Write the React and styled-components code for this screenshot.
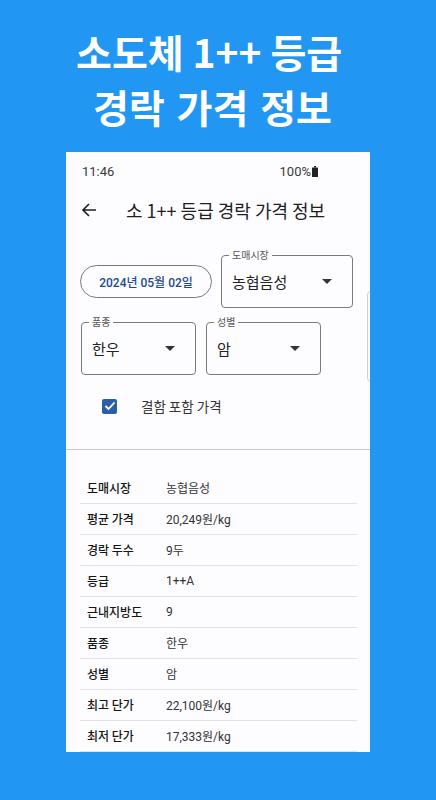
import React from 'react';
import styled, { createGlobalStyle } from 'styled-components';

const GlobalStyle = createGlobalStyle`
  html, body {
    margin: 0;
    padding: 0;
  }
  body {
    font-family: Roboto, "Noto Sans CJK KR", sans-serif;
    background: #2196f3;
  }
`;

const Page = styled.div`
  width: 436px;
  height: 800px;
  background: #2196f3;
  overflow: hidden;
  display: flex;
  flex-direction: column;
`;

const Headline = styled.div`
  height: 152px;
  box-sizing: border-box;
  padding-top: 24px;
  color: #fff;
  font-family: "Noto Sans CJK KR", sans-serif;
  font-weight: 700;
  font-size: 39px;
  line-height: 55px;
`;

const HeadLine = styled.div`
  padding-left: ${p => p.$indent}px;
  word-spacing: ${p => p.$words || 0}px;
  white-space: nowrap;
`;

const Screen = styled.div`
  margin-left: 66px;
  width: 304px;
  height: 600px;
  background: #fdfdff;
  overflow: hidden;
  display: flex;
  flex-direction: column;
`;

const StatusBar = styled.div`
  height: 40px;
  padding: 0 52px 0 16px;
  display: flex;
  align-items: center;
  justify-content: space-between;
  font-family: Roboto, sans-serif;
  font-size: 13px;
  color: #3a3a3a;
`;

const Battery = styled.span`
  display: flex;
  align-items: center;
  gap: 1px;
`;

const AppBar = styled.div`
  height: 38px;
  display: flex;
  align-items: center;
  padding-left: 15px;
  gap: 29px;
`;

const Title = styled.div`
  font-family: "Noto Sans CJK KR", sans-serif;
  font-size: 18px;
  color: #1e1e1e;
`;

const Filters = styled.div`
  margin-top: 27px;
  display: flex;
  gap: 14px;
`;

const FilterMain = styled.div`
  display: flex;
  flex-direction: column;
  gap: 14px;
  flex: none;
`;

const FilterRow = styled.div`
  display: flex;
  align-items: center;
  gap: ${p => p.$gap}px;
  padding-left: ${p => p.$pad}px;
`;

const DatePill = styled.div`
  width: 132px;
  height: 33px;
  box-sizing: border-box;
  border: 1px solid #7a7a7a;
  border-radius: 17px;
  display: flex;
  align-items: center;
  justify-content: center;
  font-family: Roboto, "Noto Sans CJK KR", sans-serif;
  font-weight: 500;
  font-size: 12px;
  color: #24488f;
`;

const Select = styled.div`
  position: relative;
  width: ${p => p.$w}px;
  height: 53px;
  box-sizing: border-box;
  border: 1px solid #7a7a7a;
  border-radius: 4px;
  display: flex;
  align-items: center;
  justify-content: space-between;
  padding: 0 20px 0 10px;
`;

const SelectLabel = styled.span`
  position: absolute;
  top: -8px;
  left: 7px;
  padding: 0 3px;
  background: #fdfdff;
  font-family: "Noto Sans CJK KR", sans-serif;
  font-size: 10px;
  line-height: 14px;
  color: #555;
`;

const SelectValue = styled.span`
  font-family: "Noto Sans CJK KR", sans-serif;
  font-size: 15px;
  color: #222;
`;

const Caret = styled.span`
  width: 0;
  height: 0;
  border-left: 5px solid transparent;
  border-right: 5px solid transparent;
  border-top: 5px solid #333;
`;

const SideCard = styled.div`
  margin-top: 36px;
  width: 40px;
  height: 91px;
  flex: none;
  box-sizing: border-box;
  border: 1px solid #d0d0d0;
  border-radius: 4px;
`;

const CheckRow = styled.div`
  margin-top: 16px;
  padding-left: 36px;
  display: flex;
  align-items: center;
  gap: 24px;
  height: 16px;
`;

const CheckBox = styled.span`
  width: 15px;
  height: 15px;
  border-radius: 2px;
  background: #2b5ea6;
  display: flex;
  align-items: center;
  justify-content: center;
`;

const CheckLabel = styled.span`
  font-family: "Noto Sans CJK KR", sans-serif;
  font-size: 13.5px;
  color: #333;
`;

const Divider = styled.div`
  margin-top: 35px;
  height: 1px;
  background: #c6c8d0;
`;

const Table = styled.div`
  margin: 23px 13px 0 14px;
  display: flex;
  flex-direction: column;
`;

const Row = styled.div`
  height: 30px;
  border-bottom: 1px solid #e2e2e6;
  display: flex;
  align-items: center;
  padding-left: 7px;
`;

const Key = styled.span`
  width: 79px;
  flex: none;
  font-family: "Noto Sans CJK KR", sans-serif;
  font-weight: 500;
  font-size: 12px;
  color: #151515;
`;

const Val = styled.span`
  font-family: Roboto, "Noto Sans CJK KR", sans-serif;
  font-size: 12px;
  color: #333;
`;

const rows = [
  ['도매시장', '농협음성'],
  ['평균 가격', '20,249원/kg'],
  ['경락 두수', '9두'],
  ['등급', '1++A'],
  ['근내지방도', '9'],
  ['품종', '한우'],
  ['성별', '암'],
  ['최고 단가', '22,100원/kg'],
  ['최저 단가', '17,333원/kg'],
];

export default function App() {
  return (
    <>
      <GlobalStyle />
      <Page>
        <Headline>
          <HeadLine $indent={76}>소도체 1++ 등급</HeadLine>
          <HeadLine $indent={93} $words={3}>경락 가격 정보</HeadLine>
        </Headline>
        <Screen>
          <StatusBar>
            <span>11:46</span>
            <Battery>
              100%
              <svg width="6" height="11" viewBox="0 0 6 11">
                <rect x="2" y="0" width="2" height="1.5" fill="#222" />
                <rect x="0" y="1.5" width="6" height="9.5" rx="0.6" fill="#222" />
              </svg>
            </Battery>
          </StatusBar>
          <AppBar>
            <svg width="16" height="16" viewBox="0 0 16 16">
              <path d="M15 8H2M8 2L2 8l6 6" fill="none" stroke="#1e1e1e" strokeWidth="1.6" />
            </svg>
            <Title>소 1++ 등급 경락 가격 정보</Title>
          </AppBar>
          <Filters>
            <FilterMain>
              <FilterRow $gap={9} $pad={14}>
                <DatePill>2024년 05월 02일</DatePill>
                <Select $w={132}>
                  <SelectLabel>도매시장</SelectLabel>
                  <SelectValue>농협음성</SelectValue>
                  <Caret />
                </Select>
              </FilterRow>
              <FilterRow $gap={10} $pad={15}>
                <Select $w={115}>
                  <SelectLabel>품종</SelectLabel>
                  <SelectValue>한우</SelectValue>
                  <Caret />
                </Select>
                <Select $w={115}>
                  <SelectLabel>성별</SelectLabel>
                  <SelectValue>암</SelectValue>
                  <Caret />
                </Select>
              </FilterRow>
            </FilterMain>
            <SideCard />
          </Filters>
          <CheckRow>
            <CheckBox>
              <svg width="12" height="10" viewBox="0 0 12 10">
                <path d="M1.5 5l3 3 6-6.5" fill="none" stroke="#fff" strokeWidth="1.8" />
              </svg>
            </CheckBox>
            <CheckLabel>결함 포함 가격</CheckLabel>
          </CheckRow>
          <Divider />
          <Table>
            {rows.map(([k, v]) => (
              <Row key={k}>
                <Key>{k}</Key>
                <Val>{v}</Val>
              </Row>
            ))}
          </Table>
        </Screen>
      </Page>
    </>
  );
}
